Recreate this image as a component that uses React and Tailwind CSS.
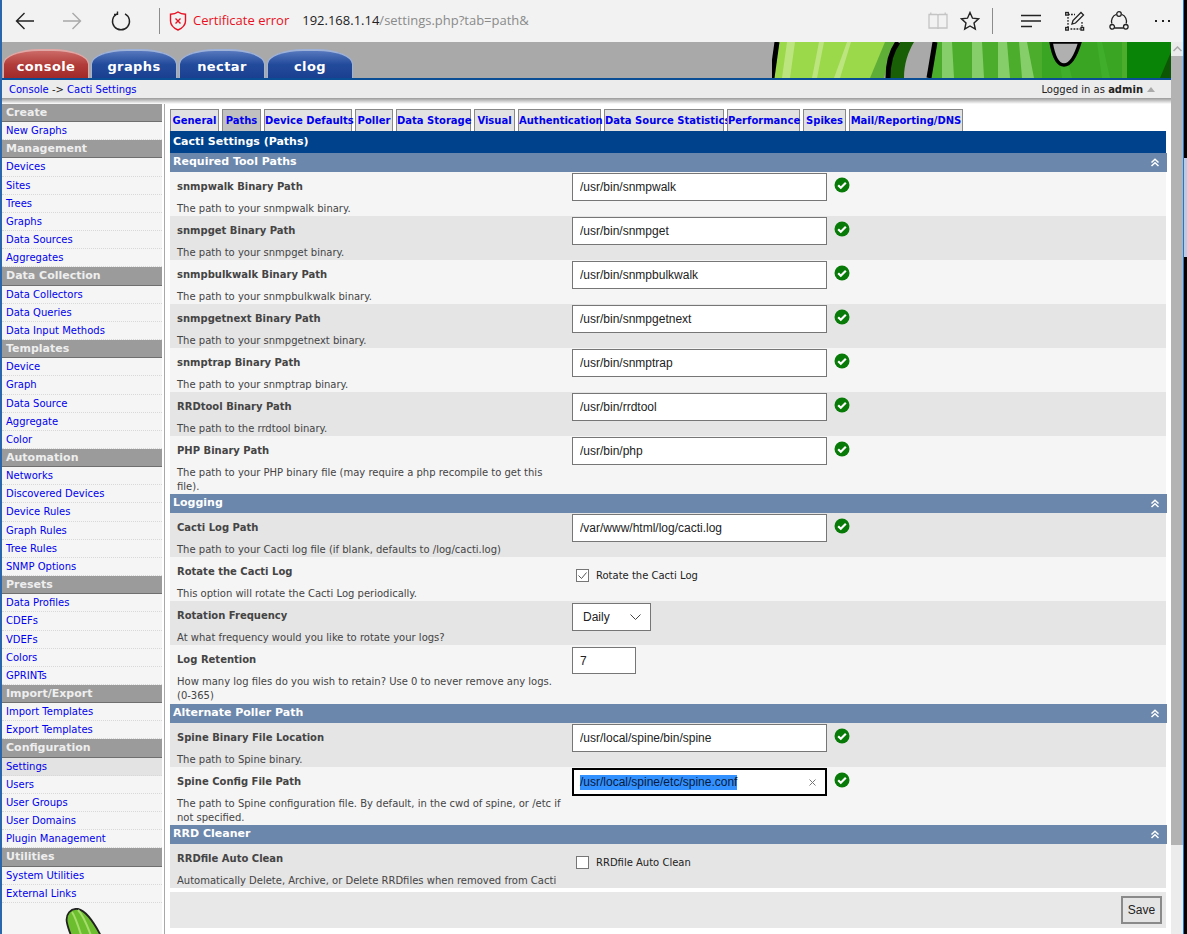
import React from "react";

const verdana = "font-['DejaVu_Sans',sans-serif]";

const menu = [
  ["Create", ["New Graphs"]],
  ["Management", ["Devices", "Sites", "Trees", "Graphs", "Data Sources", "Aggregates"]],
  ["Data Collection", ["Data Collectors", "Data Queries", "Data Input Methods"]],
  ["Templates", ["Device", "Graph", "Data Source", "Aggregate", "Color"]],
  ["Automation", ["Networks", "Discovered Devices", "Device Rules", "Graph Rules", "Tree Rules", "SNMP Options"]],
  ["Presets", ["Data Profiles", "CDEFs", "VDEFs", "Colors", "GPRINTs"]],
  ["Import/Export", ["Import Templates", "Export Templates"]],
  ["Configuration", ["Settings", "Users", "User Groups", "User Domains", "Plugin Management"]],
  ["Utilities", ["System Utilities", "External Links"]],
];

const tabs = [
  ["General", "w-[49px]"],
  ["Paths", "w-[39px]"],
  ["Device Defaults", "w-[88px]"],
  ["Poller", "w-[38px]"],
  ["Data Storage", "w-[75px]"],
  ["Visual", "w-[41px]"],
  ["Authentication", "w-[83px]"],
  ["Data Source Statistics", "w-[120px]"],
  ["Performance", "w-[73px]"],
  ["Spikes", "w-[43px]"],
  ["Mail/Reporting/DNS", "w-[114px]"],
];

const paths = [
  ["snmpwalk Binary Path", "The path to your snmpwalk binary.", "/usr/bin/snmpwalk"],
  ["snmpget Binary Path", "The path to your snmpget binary.", "/usr/bin/snmpget"],
  ["snmpbulkwalk Binary Path", "The path to your snmpbulkwalk binary.", "/usr/bin/snmpbulkwalk"],
  ["snmpgetnext Binary Path", "The path to your snmpgetnext binary.", "/usr/bin/snmpgetnext"],
  ["snmptrap Binary Path", "The path to your snmptrap binary.", "/usr/bin/snmptrap"],
  ["RRDtool Binary Path", "The path to the rrdtool binary.", "/usr/bin/rrdtool"],
];

function CheckMark() {
  return (
    <svg width="16" height="16" viewBox="0 0 16 16" className="ml-[3px] mt-[4px] shrink-0">
      <circle cx="8" cy="8" r="7.5" fill="#087a08" />
      <path d="M4.2 8.2l2.6 2.6 5-5" fill="none" stroke="#fff" strokeWidth="2.2" />
    </svg>
  );
}

function PathInput({ value }) {
  return (
    <div className="flex items-start pt-px">
      <input
        readOnly
        value={value}
        className="w-[255px] h-[28px] bg-white border border-[#767676] px-[7px] text-[12px] text-[#222] font-['Liberation_Sans',sans-serif] outline-none"
      />
      <div className="ml-[4px]"><CheckMark /></div>
    </div>
  );
}

function Row({ label, desc, alt, h = "h-[44px]", children }) {
  return (
    <div className={`flex ${h} ${alt ? "bg-[#e5e5e5]" : "bg-[#f5f5f5]"}`}>
      <div className="w-[402px] shrink-0 pl-[7px] pr-[10px] pt-[9px]">
        <div className="text-[10px] leading-[12px] font-bold text-[#444]">{label}</div>
        <div className="text-[10px] leading-[14px] mt-[9px] text-[#444]">{desc}</div>
      </div>
      <div>{children}</div>
    </div>
  );
}

function Section({ title }) {
  return (
    <div className="flex items-center justify-between h-[19px] w-[997px] bg-[#6b87ab] pl-[3px] pr-[7px]">
      <span className="text-[11px] font-bold text-white">{title}</span>
      <svg width="10" height="9" viewBox="0 0 10 9" fill="none" stroke="#fff" strokeWidth="1.5">
        <path d="M1.5 4.5L5 1.2l3.5 3.3M1.5 8L5 4.7 8.5 8" />
      </svg>
    </div>
  );
}

function Toolbar() {
  return (
    <div className="h-[42px] bg-[#f2f2f2] flex items-center shrink-0 relative">
      <svg width="20" height="18" viewBox="0 0 20 18" fill="none" stroke="#222" strokeWidth="1.4" className="ml-[13px]">
        <path d="M19 9H1.5M9.5 1L1.5 9l8 8" />
      </svg>
      <svg width="20" height="18" viewBox="0 0 20 18" fill="none" stroke="#a8a8a8" strokeWidth="1.4" className="ml-[27px]">
        <path d="M1 9h17.5M10.5 1l8 8-8 8" />
      </svg>
      <svg width="20" height="20" viewBox="0 0 20 20" fill="none" stroke="#222" strokeWidth="1.4" className="ml-[29px]">
        <path d="M6 2.8a8.5 8.5 0 1 0 8 0M6.5 0.5V3.4H3" />
      </svg>
      <div className="w-px h-[26px] bg-[#8c8c8c] ml-[28px]" />
      <svg width="18" height="20" viewBox="0 0 18 20" fill="none" stroke="#e81123" strokeWidth="1.4" className="ml-[9px]">
        <path d="M9 1c2 1.6 4.500 2.300 7.500 2.300V10c0 4-3 7-7.500 9-4.500-2-7.500-5-7.500-9V3.300C4.500 3.300 7 2.600 9 1zM6.500 7.500l5 5M11.500 7.500l-5 5" />
      </svg>
      <span className="ml-[6px] text-[13px] text-[#e81123] font-['Open_Sans',sans-serif] whitespace-nowrap">Certificate error</span>
      <span className="ml-[13px] text-[13px] text-[#222] font-['Open_Sans',sans-serif] whitespace-nowrap">192.168.1.14<span className="text-[#8a8a8a]">/settings.php?tab=path&amp;</span></span>
      <div className="flex-1" />
      <svg width="20" height="20" viewBox="0 0 20 20" fill="none" stroke="#c4c4c4" strokeWidth="1.3">
        <path d="M1 3.500h8c.6 0 1 .4 1 1 0-.6.4-1 1-1h8V17h-8c-.6 0-1 .4-1 1 0-.6-.4-1-1-1H1zM10 4.500V18M2.800 1.500v2M17.200 1.500v2" />
      </svg>
      <svg width="20" height="20" viewBox="0 0 20 20" fill="none" stroke="#222" strokeWidth="1.4" className="ml-[12px]">
        <path d="M10 1.500l2.500 5.700 6 .6-4.500 4.100 1.300 6.100L10 15l-5.300 3 1.300-6.100-4.500-4.100 6-.6z" />
      </svg>
      <div className="w-px h-[26px] bg-[#8c8c8c] ml-[12px]" />
      <svg width="20" height="14" viewBox="0 0 20 14" fill="none" stroke="#222" strokeWidth="1.3" className="ml-[28px]">
        <path d="M0 1.500h20M0 7h20M0 12.500h11" />
      </svg>
      <svg width="20" height="20" viewBox="0 0 20 20" fill="none" stroke="#222" strokeWidth="1.3" className="ml-[24px]">
        <path d="M3 3.500h7M3 6v10M17 11v5M5.500 18h10" strokeDasharray="1.800 1.200" />
        <rect x="0.700" y="1.500" width="2.600" height="2.600" />
        <rect x="0.700" y="16.500" width="2.600" height="2.600" />
        <rect x="16" y="16.500" width="2.600" height="2.600" />
        <path d="M7 13l1-3.500L16 1.500l2.500 2.500-8 8z" />
      </svg>
      <svg width="20" height="20" viewBox="0 0 20 20" fill="none" stroke="#222" strokeWidth="1.3" className="ml-[24px]">
        <path d="M7 3.500A7.500 7.500 0 0 0 2.800 12.500M13 3.500a7.500 7.500 0 0 1 4.200 9M5.500 17h9" />
        <circle cx="10" cy="3" r="2.300" />
        <circle cx="3.200" cy="15.800" r="2.300" />
        <circle cx="16.800" cy="15.800" r="2.300" />
      </svg>
      <div className="flex gap-[4.500px] ml-[26px] mr-[13px]">
        <div className="w-[2px] h-[2px] bg-[#222]" />
        <div className="w-[2px] h-[2px] bg-[#222]" />
        <div className="w-[2px] h-[2px] bg-[#222]" />
      </div>
    </div>
  );
}

function NavTab({ label, red }) {
  return (
    <div className={`w-[86px] h-[29px] rounded-t-[36px_15px] flex items-center justify-center pt-[4px] border-t-2 border-x ${red ? "bg-gradient-to-b from-[#cb6a68] via-[#b23c39] to-[#a12a28] border-[#e0a9a6]" : "bg-gradient-to-b from-[#5678bd] via-[#234b9c] to-[#1a3f90] border-[#9fb2d8]"}`}>
      <span className="text-white font-bold text-[13px] tracking-[0.4px]">{label}</span>
    </div>
  );
}

function Cactus() {
  return (
    <svg width="399" height="36" viewBox="0 0 399 36" className="shrink-0">
      <rect width="399" height="36" fill="#a9a9a9" />
      <path d="M0 36L5 0H122L112 36Z" fill="#9bd84a" />
      <path d="M10 36L15 0h8L18 36zM40 36L47 0h5L45 36zM62 36L75 0h4L68 36z" fill="#bde57f" />
      <path d="M98 36L113 0h10L112 36z" fill="#5fae38" />
      <path d="M0 36L5 0" stroke="#000" strokeWidth="5" />
      <path d="M118 36C118 20 122 8 128 0H142C136 10 132 22 132 36Z" fill="#185f05" />
      <path d="M116 36C116 20 120 8 126 0" stroke="#000" strokeWidth="5" fill="none" />
      <path d="M158 36L164 0H399V36Z" fill="#4cad2c" />
      <path d="M170 36L170 0h10L182 36zM200 36L200 0h10L212 36zM226 36L226 0h9L238 36zM250 36L247 0h8L262 36z" fill="#86ce69" />
      <path d="M290 36L285 0h6L300 36zM330 36L325 0h5L338 36z" fill="#5ec03f" />
      <path d="M270 36V0h80v36z" fill="#2a9e1c" opacity="0.55" />
      <path d="M355 36V0h44v36z" fill="#0a8406" />
      <path d="M388 36L399 10V36z" fill="#0c5606" />
      <path d="M157 36L163 0" stroke="#000" strokeWidth="5" />
      <path d="M279 0C281 12 285 23 292 23C300 23 305 10 308 0Z" fill="#b0b0b0" stroke="#000" strokeWidth="3.500" />
    </svg>
  );
}

function Cucumber() {
  return (
    <svg width="46" height="30" viewBox="0 0 46 30" className="block ml-[60px] mt-[5px]">
      <path d="M5 15C3 6 9 0 16 1c9 2 17 15 24 29H10C8 25 6 20 5 15Z" fill="#6cbe2e" stroke="#222" strokeWidth="1.800" />
      <path d="M10 4c4 6 7 16 10 26M16 2c6 6 10 18 14 28" stroke="#a6dd6c" strokeWidth="2" fill="none" />
    </svg>
  );
}

function Sidebar() {
  return (
    <div className="w-[163px] shrink-0 border-r border-[#a8a8a8] pr-[2px] bg-white overflow-hidden">
      <div className="bg-[#f5f5f5]">
        {menu.map(([head, items]) => (
          <div key={head}>
            <div className="h-[18.160px] bg-[#9b9b9b] border-b border-[#6f6f6f] pl-[4px] text-[11px] leading-[17px] font-bold text-[#eeeeee]">{head}</div>
            {items.map((item) => (
              <div key={item} className={`h-[18.160px] border-b border-dotted border-[#d8d8d8] pl-[4px] text-[10px] leading-[17px] text-[#0000ee] ${item === "Settings" ? "bg-[#e3e3e3]" : ""}`}>{item}</div>
            ))}
          </div>
        ))}
        <Cucumber />
      </div>
    </div>
  );
}

function Content() {
  return (
    <div className="flex-1 pl-[5px] pt-[5px] overflow-hidden bg-white">
      <div className="flex gap-[3px] h-[22px]">
        {tabs.map(([t, w]) => (
          <div key={t} className={`${w} shrink-0 text-center border border-b-0 border-[#888] text-[10px] font-bold leading-[21px] text-[#0000ee] whitespace-nowrap ${t === "Paths" ? "bg-[#c0c0c0]" : "bg-[#e2e2e2]"}`}>{t}</div>
        ))}
      </div>
      <div className="h-[22px] w-[996px] bg-[#00438c] pl-[3px] text-[11px] leading-[21px] font-bold text-white">Cacti Settings (Paths)</div>
      <Section title="Required Tool Paths" />
      <div className="w-[996px]">
        {paths.map(([label, desc, value], i) => (
          <Row key={label} label={label} desc={desc} alt={i % 2 === 1}>
            <PathInput value={value} />
          </Row>
        ))}
        <Row label="PHP Binary Path" desc="The path to your PHP binary file (may require a php recompile to get this file)." h="h-[58px]">
          <PathInput value="/usr/bin/php" />
        </Row>
      </div>
      <Section title="Logging" />
      <div className="w-[996px]">
        <Row label="Cacti Log Path" desc="The path to your Cacti log file (if blank, defaults to /log/cacti.log)" alt>
          <PathInput value="/var/www/html/log/cacti.log" />
        </Row>
        <Row label="Rotate the Cacti Log" desc="This option will rotate the Cacti Log periodically.">
          <label className="flex items-center gap-[7px] ml-[4px] mt-[11px] text-[10px] text-[#222]">
            <span className="w-[13px] h-[13px] border border-[#767676] bg-white flex items-center justify-center">
              <svg width="11" height="11" viewBox="0 0 11 11" fill="none" stroke="#555" strokeWidth="1"><path d="M1.500 5.500l3 3 5-6" /></svg>
            </span>
            Rotate the Cacti Log
          </label>
        </Row>
        <Row label="Rotation Frequency" desc="At what frequency would you like to rotate your logs?" alt>
          <div className="mt-[2px] w-[79px] h-[28px] bg-white border border-[#767676] flex items-center justify-between pl-[10px] pr-[9px] text-[12px] text-[#222] font-['Liberation_Sans',sans-serif]">
            Daily
            <svg width="11" height="6" viewBox="0 0 11 6" fill="none" stroke="#444" strokeWidth="1"><path d="M.5.500l5 5 5-5" /></svg>
          </div>
        </Row>
        <Row label="Log Retention" desc="How many log files do you wish to retain? Use 0 to never remove any logs. (0-365)" h="h-[59px]">
          <input readOnly value="7" className="mt-[2px] w-[64px] h-[27px] bg-white border border-[#767676] px-[7px] text-[12px] text-[#222] font-['Liberation_Sans',sans-serif] outline-none" />
        </Row>
      </div>
      <Section title="Alternate Poller Path" />
      <div className="w-[996px]">
        <Row label="Spine Binary File Location" desc="The path to Spine binary." alt>
          <PathInput value="/usr/local/spine/bin/spine" />
        </Row>
        <Row label="Spine Config File Path" desc="The path to Spine configuration file. By default, in the cwd of spine, or /etc if not specified." h="h-[58px]">
          <div className="flex items-start pt-px">
            <div className="w-[255px] h-[28px] bg-white border-2 border-black pl-[6px] pr-[9px] flex items-center justify-between text-[12px] font-['Liberation_Sans',sans-serif]">
              <span className="bg-[#3390ff] text-[#0a1a3a] leading-[15px]">/usr/local/spine/etc/spine.conf</span>
              <svg width="7" height="7" viewBox="0 0 7 7" stroke="#777" strokeWidth="1"><path d="M.5.500l6 6M6.500.500l-6 6" /></svg>
            </div>
            <div className="ml-[4px]"><CheckMark /></div>
          </div>
        </Row>
      </div>
      <Section title="RRD Cleaner" />
      <div className="w-[996px]">
        <Row label="RRDfile Auto Clean" desc="Automatically Delete, Archive, or Delete RRDfiles when removed from Cacti" alt>
          <label className="flex items-center gap-[7px] ml-[4px] mt-[11px] text-[10px] text-[#222]">
            <span className="w-[13px] h-[13px] border border-[#767676] bg-white" />
            RRDfile Auto Clean
          </label>
        </Row>
      </div>
      <div className="mt-[4px] w-[996px] h-[36px] bg-[#e8e8e8] flex items-center justify-end pr-[4px]">
        <button className="w-[41px] h-[28px] bg-[#e4e4e4] border-2 border-[#8a8a8a] text-[12px] text-[#222] font-['Liberation_Sans',sans-serif]">Save</button>
      </div>
    </div>
  );
}

export default function App() {
  return (
    <div className={`${verdana} w-[1187px] h-[934px] overflow-hidden flex bg-white`}>
      <div className="flex-1 flex flex-col min-w-0 border-l-2 border-[#2a66ab]">
        <Toolbar />
        <div className="flex flex-1 min-h-0">
          <div className="flex-1 flex flex-col min-w-0">
            <div className="h-[36px] bg-[#a9a9a9] flex justify-between items-end shrink-0 pl-px">
              <div className="flex gap-[2px]">
                <NavTab label="console" red />
                <NavTab label="graphs" />
                <NavTab label="nectar" />
                <NavTab label="clog" />
              </div>
              <Cactus />
            </div>
            <div className="h-[2px] bg-[#0a4f96] shrink-0" />
            <div className="h-[18px] bg-[#ececec] flex items-center justify-between pl-[7px] pr-[16px] text-[10px] text-[#222] shrink-0">
              <div><span className="text-[#0000ee]">Console</span> -&gt; <span className="text-[#0000ee]">Cacti Settings</span></div>
              <div className="flex items-center gap-[4px]">
                <span>Logged in as <b>admin</b></span>
                <svg width="8" height="5" viewBox="0 0 8 5"><path d="M0 5L4 0l4 5z" fill="#aaa" /></svg>
              </div>
            </div>
            <div className="h-[6px] bg-gradient-to-b from-[#9a9a9a] to-white shrink-0" />
            <div className="flex flex-1 min-h-0">
              <Sidebar />
              <Content />
            </div>
          </div>
          <div className="w-[12px] shrink-0 flex flex-col bg-[#ececec]">
            <div className="h-[14px] flex items-center justify-center">
              <svg width="9" height="6" viewBox="0 0 9 6" fill="none" stroke="#aaa" strokeWidth="1.500"><path d="M.5 5L4.500 1l4 4" /></svg>
            </div>
            <div className="h-[789px] bg-[#b3b3b3]" />
          </div>
        </div>
      </div>
      <div className="w-[4px] shrink-0 bg-black border-l border-[#1b7bd0]">
        <div className="mt-[158px] h-[99px] bg-[#b9cbe6]" />
      </div>
    </div>
  );
}
